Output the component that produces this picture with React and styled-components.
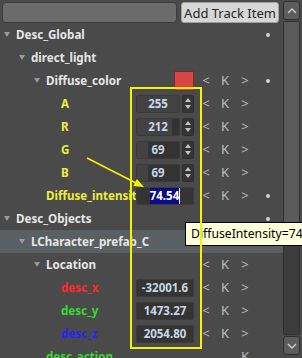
import React from 'react'
import styled, { createGlobalStyle } from 'styled-components'

const GlobalStyle = createGlobalStyle`
  html, body {
    margin: 0;
    padding: 0;
    background: #4a4a4a;
  }
  body {
    font-family: "Noto Sans", "DejaVu Sans", sans-serif;
  }
`

const Frame = styled.div`
  position: relative;
  width: 302px;
  height: 358px;
  overflow: hidden;
  display: flex;
  background: #4a4a4a;
`
const Main = styled.div`
  width: 283px;
  flex: none;
  display: flex;
  flex-direction: column;
`
const TopBar = styled.div`
  height: 23px;
  flex: none;
  display: flex;
  align-items: flex-start;
  gap: 4px;
  padding: 2px 0 0 2px;
  box-sizing: border-box;
`
const Search = styled.div`
  width: 175px;
  height: 21px;
  box-sizing: border-box;
  background: #6b6b6b;
  border: 1px solid #3b3b3b;
  border-radius: 4px;
`
const AddButton = styled.button`
  width: 98px;
  height: 21px;
  box-sizing: border-box;
  padding: 0;
  background: #d7d7d7;
  border: 1px solid #a0a0a0;
  border-radius: 3px;
  color: #262626;
  font-family: "Noto Sans", sans-serif;
  font-size: 13px;
  line-height: 18px;
`
const Row = styled.div`
  height: 23px;
  flex: none;
  display: grid;
  grid-template-columns: 136px 60px 60px 27px;
  grid-template-rows: 23px;
  align-items: center;
  background: ${(p) => (p.$selected ? '#5a5f63' : 'transparent')};
`
const Label = styled.div`
  grid-row: 1;
  grid-column: ${(p) => (p.$wide ? '1 / 4' : '1 / 2')};
  box-sizing: border-box;
  padding-left: ${(p) => 4 + p.$depth * 15}px;
  display: flex;
  align-items: center;
  white-space: nowrap;
  overflow: hidden;
`
const Caret = styled.span`
  width: 0;
  height: 0;
  flex: none;
  border-left: 3.5px solid transparent;
  border-right: 3.5px solid transparent;
  border-top: 5px solid ${(p) => (p.$open ? '#9a9a9a' : 'transparent')};
  margin-right: 6px;
`
const Name = styled.span`
  font-size: 11.6px;
  font-weight: 700;
  color: ${(p) => p.$color || '#e6e6e6'};
`
const ValueCell = styled.div`
  grid-row: 1;
  grid-column: 2;
  display: flex;
  align-items: center;
`
const Swatch = styled.div`
  width: 20px;
  height: 20px;
  margin-left: 38px;
  box-sizing: border-box;
  background: #d94545;
  border: 1px solid #6a3030;
`
const Field = styled.div`
  width: ${(p) => p.$width || 58}px;
  height: 18px;
  box-sizing: border-box;
  border: 1px solid #3a3a3a;
  border-radius: 2px;
  background: ${(p) =>
    p.$fill != null
      ? `linear-gradient(to right, #424242 ${p.$fill}%, #333333 ${p.$fill}%)`
      : '#343434'};
  display: flex;
  align-items: center;
  justify-content: center;
  color: #c9d7e6;
  font-size: 11.5px;
  font-weight: 700;
  line-height: 16px;
`
const Selected = styled.span`
  background: #0b0b86;
  color: #ffffff;
  border-right: 1px solid #ffffff;
`
const SpinButtons = styled.div`
  width: 12px;
  height: 18px;
  margin-left: 2px;
  box-sizing: border-box;
  border: 1px solid #2e2e2e;
  border-radius: 2px;
  background: #343434;
  display: flex;
  flex-direction: column;
  align-items: center;
  justify-content: center;
  gap: 3px;
`
const SpinArrow = styled.span`
  width: 0;
  height: 0;
  border-left: 3px solid transparent;
  border-right: 3px solid transparent;
  ${(p) => (p.$up ? 'border-bottom' : 'border-top')}: 4px solid #c4c4c4;
`
const Nav = styled.div`
  grid-row: 1;
  grid-column: 3;
  display: grid;
  grid-template-columns: 20px 18px 22px;
  color: #bcbcbc;
  font-size: 13px;
  line-height: 23px;
  text-align: center;
`
const DotCell = styled.div`
  grid-row: 1;
  grid-column: 4;
  box-sizing: border-box;
  padding-left: 10px;
  display: flex;
  align-items: center;
`
const Dot = styled.span`
  width: 4px;
  height: 4px;
  border-radius: 50%;
  background: #d2d2d2;
`
const ScrollBar = styled.div`
  width: 17px;
  flex: none;
  display: flex;
  flex-direction: column;
  padding: 1px 0 3px;
  box-sizing: border-box;
  gap: 1px;
`
const ScrollButton = styled.div`
  height: 19px;
  flex: none;
  box-sizing: border-box;
  background: #5d5d5d;
  border: 1px solid #2d2d2d;
  border-radius: 3px;
  display: flex;
  align-items: center;
  justify-content: center;
`
const Track = styled.div`
  flex: 1;
  display: flex;
  flex-direction: column;
  background: #3c3c3c;
  border: 1px solid #2f2f2f;
  border-radius: 2px;
`
const Handle = styled.div`
  height: 218px;
  background: #5a5a5a;
  border-bottom: 1px solid #333;
`
const Marker = styled.div`
  position: absolute;
  left: 130px;
  top: 87px;
  width: 72px;
  height: 262px;
  box-sizing: border-box;
  border: 2px solid #f4f400;
  z-index: 3;
  pointer-events: none;
`
const Pointer = styled.svg`
  position: absolute;
  left: 0;
  top: 0;
  z-index: 3;
`
const Tooltip = styled.div`
  position: absolute;
  left: 185px;
  top: 222px;
  width: 118px;
  height: 24px;
  box-sizing: border-box;
  padding-left: 5px;
  background: #ffffdc;
  border: 1px solid #000;
  color: #000;
  font-size: 12.2px;
  line-height: 22px;
  white-space: nowrap;
  overflow: hidden;
  z-index: 2;
`

const Chevron = ({ up }) => (
  <svg width="10" height="6" viewBox="0 0 10 6">
    <polyline
      points={up ? '1,5 5,1 9,5' : '1,1 5,5 9,1'}
      fill="none"
      stroke="#cfcfcf"
      strokeWidth="1.4"
    />
  </svg>
)

const rows = [
  { name: 'Desc_Global', depth: 0, open: true, dot: true },
  { name: 'direct_light', depth: 1, open: true },
  { name: 'Diffuse_color', depth: 2, open: true, value: { type: 'swatch' }, nav: true, dot: true },
  { name: 'A', depth: 3, color: '#eded3f', value: { type: 'spin', v: 255 }, nav: true },
  { name: 'R', depth: 3, color: '#eded3f', value: { type: 'spin', v: 212 }, nav: true },
  { name: 'G', depth: 3, color: '#eded3f', value: { type: 'spin', v: 69 }, nav: true },
  { name: 'B', depth: 3, color: '#eded3f', value: { type: 'spin', v: 69 }, nav: true },
  { name: 'Diffuse_intensit', depth: 2, color: '#eded3f', value: { type: 'edit', v: '74.54' }, nav: true, dot: true },
  { name: 'Desc_Objects', depth: 0, open: true, dot: true },
  { name: 'LCharacter_prefab_C', depth: 1, open: true, selected: true },
  { name: 'Location', depth: 2, open: true, nav: true },
  { name: 'desc_x', depth: 3, color: '#ff2b2b', value: { type: 'field', v: '-32001.6' }, nav: true },
  { name: 'desc_y', depth: 3, color: '#33dd33', value: { type: 'field', v: '1473.27' }, nav: true },
  { name: 'desc_z', depth: 3, color: '#2323ff', value: { type: 'field', v: '2054.80' }, nav: true },
  { name: 'desc_action', depth: 2, color: '#33dd33', navK: true },
]

const Value = ({ value }) => {
  if (value.type === 'swatch') return <Swatch />
  if (value.type === 'spin') {
    return (
      <>
        <Field $width={44} $fill={Math.round((value.v / 255) * 100)}>{value.v}</Field>
        <SpinButtons>
          <SpinArrow $up />
          <SpinArrow />
        </SpinButtons>
      </>
    )
  }
  if (value.type === 'edit') {
    return (
      <Field>
        <Selected>{value.v}</Selected>
      </Field>
    )
  }
  return <Field>{value.v}</Field>
}

const TreeRow = ({ row }) => (
  <Row $selected={row.selected}>
    <Label $depth={row.depth} $wide={!row.value && !row.nav && !row.navK}>
      <Caret $open={row.open} />
      <Name $color={row.color}>{row.name}</Name>
    </Label>
    {row.value && (
      <ValueCell>
        <Value value={row.value} />
      </ValueCell>
    )}
    {row.nav && (
      <Nav>
        <span>&lt;</span>
        <span>K</span>
        <span>&gt;</span>
      </Nav>
    )}
    {row.navK && (
      <Nav>
        <span />
        <span />
        <span>K</span>
      </Nav>
    )}
    {row.dot && (
      <DotCell>
        <Dot />
      </DotCell>
    )}
  </Row>
)

const App = () => {
  return (
    <Frame>
      <GlobalStyle />
      <Main>
        <TopBar>
          <Search />
          <AddButton>Add Track Item</AddButton>
        </TopBar>
        {rows.map((row) => (
          <TreeRow key={row.name} row={row} />
        ))}
      </Main>
      <ScrollBar>
        <ScrollButton>
          <Chevron up />
        </ScrollButton>
        <Track>
          <Handle />
        </Track>
        <ScrollButton>
          <Chevron />
        </ScrollButton>
      </ScrollBar>
      <Tooltip>DiffuseIntensity=74</Tooltip>
      <Marker />
      <Pointer width="302" height="358" viewBox="0 0 302 358">
        <line x1="87" y1="158" x2="137" y2="183.5" stroke="#f4f400" strokeWidth="1.5" />
        <polygon points="144,187 133.3,186.1 136.9,178.9" fill="#f4f400" />
      </Pointer>
    </Frame>
  )
}

export default App
